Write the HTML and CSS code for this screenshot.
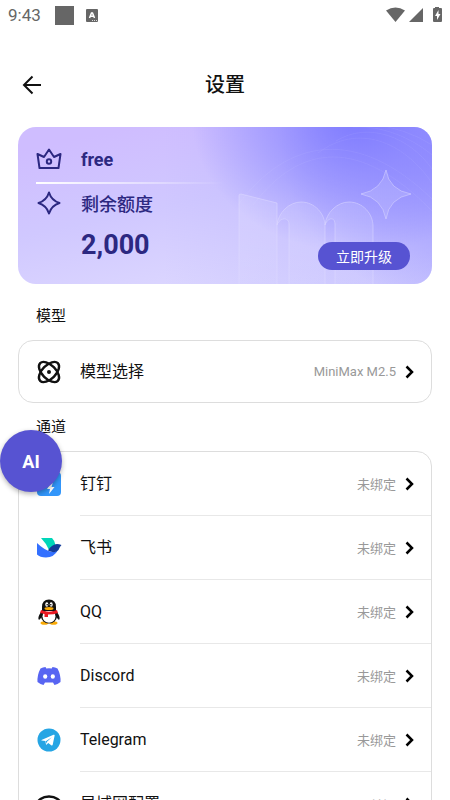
FILE: index.html
```
<!DOCTYPE html>
<html lang="zh-CN">
<head>
    <meta charset="UTF-8">
    <meta name="viewport" content="width=device-width, initial-scale=1.0">
    <title>设置</title>
    <link rel="stylesheet" href="styles.css">
</head>
<body>
    <div class="app">
        <div class="status-bar">
            <span class="time">9:43</span>
            <svg class="status-square" viewBox="0 0 19 19"><rect width="19" height="19" fill="#666"/></svg>
            <svg class="status-input" viewBox="0 0 12 13">
                <rect width="12" height="13" rx="1" fill="#666"/>
                <path d="M3.5 9 5.5 4h1l2 5M4.3 7.3h3.4" fill="none" stroke="#fff" stroke-width="1.5"/>
                <path d="M6 11.5h5" stroke="#ddd" stroke-dasharray="1 1"/>
            </svg>
            <svg class="status-icons" viewBox="0 0 56 18" fill="#666">
                <path d="M0 4.5Q9.5-1.5 19 4.5L9.500 16z"/>
                <path d="M23 16 37 2v14z"/>
                <path d="M49 1h4v1h2q1 0 1 1v12q0 1-1 1h-7q-1 0-1-1V3q0-1 1-1h1z"/>
                <path d="m52.500 4-3.500 6h2v4l3.500-6h-2z" fill="#fff"/>
            </svg>
        </div>

        <header class="header">
            <button class="back" aria-label="返回">
                <svg viewBox="0 0 20 20" fill="none" stroke="#111" stroke-width="2"><path d="M19 10H2M10.500 1.500 2 10l8.500 8.500"/></svg>
            </button>
            <h1>设置</h1>
        </header>

        <main class="content">
            <section class="plan">
                <svg class="plan-art" viewBox="0 0 414 157" preserveAspectRatio="xMaxYMid slice" fill="none">
                    <defs>
                        <linearGradient id="letter" x1="0" y1="66" x2="0" y2="157" gradientUnits="userSpaceOnUse">
                            <stop offset="0" stop-color="#fff" stop-opacity=".14"/>
                            <stop offset="1" stop-color="#fff" stop-opacity=".03"/>
                        </linearGradient>
                    </defs>
                    <g stroke="#fff" stroke-opacity=".06">
                        <path d="M220 78C270 10 340 0 414 72M235 78C282 16 342 10 414 84M300 26C340-4 385 14 414 56M318 14C350-6 392 10 414 42M335 0C370-2 400 16 414 28M350-4Q390 2 414 18"/>
                    </g>
                    <g fill="url(#letter)" stroke="#e0dcff" stroke-opacity=".5">
                        <path d="M221 158V68q0-1 2-1l36 9v82z"/>
                        <path d="M259 98c1-12 12-23 24-23 14 0 24 12 24 24v59h-36v-61c0-7-9-7-12 1z"/>
                        <path d="M307 98c1-12 12-23 24-23 14 0 24 12 24 24v59h-38v-61c0-7-7-7-10 1z"/>
                        <path d="M368 43q3 20 25 24-22 4-25 25-4-21-25-25 21-4 25-24z"/>
                    </g>
                </svg>
                <div class="plan-row plan-name">
                    <svg class="plan-icon" viewBox="0 0 26 26" fill="none" stroke="#2c2881" stroke-width="2" stroke-linejoin="round">
                        <path d="M1.500 8 8 11l5-7.500L18 11l6.500-3-2 14h-19z"/>
                        <circle cx="13" cy="15.500" r="2.200"/>
                    </svg>
                    <strong>free</strong>
                </div>
                <div class="plan-line"></div>
                <div class="plan-row plan-quota">
                    <svg class="plan-icon" viewBox="0 0 26 26" fill="none" stroke="#2c2881" stroke-width="2" stroke-linejoin="round">
                        <path d="M13 2.500Q15.500 10.500 23.500 13 15.500 15.500 13 23.500 10.500 15.500 2.500 13 10.500 10.500 13 2.500z"/>
                    </svg>
                    <span>剩余额度</span>
                </div>
                <div class="plan-bottom">
                    <strong class="amount">2,000</strong>
                    <button class="upgrade">立即升级</button>
                </div>
            </section>

            <h2>模型</h2>
            <div class="list">
                <button class="item">
                    <svg class="icon" viewBox="0 0 26 26" fill="none" stroke="#111" stroke-width="2.400">
                        <ellipse cx="13" cy="13" rx="12.500" ry="6.800" transform="rotate(45 13 13)"/>
                        <ellipse cx="13" cy="13" rx="12.500" ry="6.800" transform="rotate(-45 13 13)"/>
                        <circle cx="13" cy="13" r="2" fill="#111" stroke="none"/>
                    </svg>
                    <span class="row"><span class="name">模型选择</span><span class="value">MiniMax M2.5</span><svg class="arrow" viewBox="0 0 10 14"><path d="m1.500 1.500 5.500 5.500-5.500 5.500"/></svg></span>
                </button>
            </div>

            <h2>通道</h2>
            <div class="list">
                <button class="item">
                    <svg class="icon" viewBox="0 0 26 26">
                        <rect x="1" y="1" width="24" height="24" rx="4" fill="#3296fa"/>
                        <path d="m15.500 11-4.500 7h3l-1 5 5.500-7h-3l1.500-5z" fill="#fff"/>
                    </svg>
                    <span class="row"><span class="name">钉钉</span><span class="value">未绑定</span><svg class="arrow" viewBox="0 0 10 14"><path d="m1.500 1.500 5.500 5.500-5.500 5.500"/></svg></span>
                </button>
                <button class="item">
                    <svg class="icon" viewBox="0 0 26 26">
                        <path d="M5 3h11q3 3 3.500 7L13 15Q10 8 5 3z" fill="#00d6b9"/>
                        <path d="M1 8q7 7 15 9 4 0 6-2-4 7.500-12 7.500-6 0-9-3z" fill="#3370ff"/>
                        <path d="M12 15.500q4-6.500 9-6.500 2 0 4.500 1-2 2-3 5-3 4-10.500.5z" fill="#133c9a"/>
                    </svg>
                    <span class="row"><span class="name">飞书</span><span class="value">未绑定</span><svg class="arrow" viewBox="0 0 10 14"><path d="m1.500 1.500 5.500 5.500-5.500 5.500"/></svg></span>
                </button>
                <button class="item">
                    <svg class="icon" viewBox="0 0 26 26">
                        <path d="M5 13q-4 6-2 8l3-3h14l3 3q2-2-2-8z" fill="#111"/>
                        <ellipse cx="8.500" cy="24" rx="4" ry="1.800" fill="#faab07"/>
                        <ellipse cx="17.500" cy="24" rx="4" ry="1.800" fill="#faab07"/>
                        <ellipse cx="13" cy="17" rx="8" ry="7.500" fill="#111"/>
                        <ellipse cx="13" cy="17.500" rx="6.500" ry="6.200" fill="#fff"/>
                        <path d="M6 12V8q0-7.500 7-7.500T20 8v4z" fill="#111"/>
                        <ellipse cx="10.800" cy="5.500" rx="1.500" ry="2.200" fill="#fff"/>
                        <ellipse cx="15.200" cy="5.500" rx="1.500" ry="2.200" fill="#fff"/>
                        <circle cx="11.200" cy="5.800" r=".8"/><circle cx="14.800" cy="5.800" r=".8"/>
                        <ellipse cx="13" cy="9.500" rx="4.500" ry="1.500" fill="#faab07"/>
                        <path d="M5 11q8 3.500 16 0l1 3q-4 1.500-10 1.500V18H8.500v-3L4 14z" fill="#eb1923"/>
                    </svg>
                    <span class="row"><span class="name">QQ</span><span class="value">未绑定</span><svg class="arrow" viewBox="0 0 10 14"><path d="m1.500 1.500 5.500 5.500-5.500 5.500"/></svg></span>
                </button>
                <button class="item">
                    <svg class="icon" viewBox="0 0 26 26">
                        <path d="M9.500 4Q7 4 4.500 5.500 1 12 1.500 19q3 2.500 6 3l1.500-2.500h8l1.500 2.500q3-.5 6-3Q25 12 21.500 5.500 19 4 16.500 4l-.8 1.500q-2.700-.4-5.400 0z" fill="#5865f2"/>
                        <ellipse cx="9.200" cy="13.500" rx="2.100" ry="2.300" fill="#fff"/>
                        <ellipse cx="16.800" cy="13.500" rx="2.100" ry="2.300" fill="#fff"/>
                    </svg>
                    <span class="row"><span class="name">Discord</span><span class="value">未绑定</span><svg class="arrow" viewBox="0 0 10 14"><path d="m1.500 1.500 5.500 5.500-5.500 5.500"/></svg></span>
                </button>
                <button class="item">
                    <svg class="icon" viewBox="0 0 26 26">
                        <circle cx="13" cy="13" r="11.500" fill="#26a5e4"/>
                        <path d="m5.500 13 12-5.200q1.400-.5 1.100 1l-1.900 9q-.3 1.300-1.500.5l-3-2.200-1.500 1.500q-.7.500-.8-.5l-.5-3-3.700-.6q-.7-.2-.2-.5z" fill="#fff"/>
                        <path d="m9.800 14.200 6-4-4.800 4.600-.5 2z" fill="#26a5e4"/>
                    </svg>
                    <span class="row"><span class="name">Telegram</span><span class="value">未绑定</span><svg class="arrow" viewBox="0 0 10 14"><path d="m1.500 1.500 5.500 5.500-5.500 5.500"/></svg></span>
                </button>
                <button class="item">
                    <svg class="icon" viewBox="0 0 26 26" fill="none" stroke="#111" stroke-width="2.400">
                        <ellipse cx="13" cy="14" rx="12" ry="8.500"/>
                        <circle cx="13" cy="14" r="3"/>
                    </svg>
                    <span class="row"><span class="name">局域网配置</span><span class="value">已关闭</span><svg class="arrow" viewBox="0 0 10 14"><path d="m1.500 1.500 5.500 5.500-5.500 5.500"/></svg></span>
                </button>
            </div>
        </main>

        <button class="ai">AI</button>
    </div>
</body>
</html>
```

FILE: styles.css
```
* {
    margin: 0;
    padding: 0;
    box-sizing: border-box;
    font-family: Roboto, "Noto Sans CJK SC", sans-serif;
}

body {
    background: #fff;
    color: #111;
}

button {
    border: none;
    background: none;
    color: inherit;
    cursor: pointer;
}

svg {
    display: block;
    flex-shrink: 0;
}

.app {
    position: relative;
    display: flex;
    flex-direction: column;
    height: 100vh;
    overflow: hidden;
}

.status-bar {
    display: flex;
    align-items: center;
    height: 30px;
    padding: 0 8px;
    flex-shrink: 0;
}

.time {
    font-size: 17px;
    color: #666;
}

.status-square {
    width: 19px;
    height: 19px;
    margin-left: 14px;
}

.status-input {
    width: 12px;
    height: 13px;
    margin-left: 12px;
}

.status-icons {
    width: 56px;
    height: 18px;
    margin-left: auto;
}

.header {
    display: grid;
    grid-template-columns: 28px 1fr 28px;
    align-items: center;
    height: 110px;
    padding: 0 18px;
    flex-shrink: 0;
}

.header h1 {
    font-size: 20px;
    font-weight: 500;
    line-height: 28px;
    text-align: center;
}

.back svg {
    width: 20px;
    height: 20px;
    margin: auto;
}

.content {
    flex: 1;
    min-height: 0;
    padding: 0 18px;
    margin-top: -13px;
    overflow: hidden;
}

.plan {
    position: relative;
    height: 157px;
    margin-bottom: 20px;
    padding: 18px;
    border-radius: 18px;
    overflow: hidden;
    color: #2c2881;
    background:
        radial-gradient(ellipse 40% 85% at 82% -5%, rgba(112, 110, 255, 0.9) 0%, rgba(125, 122, 255, 0.6) 40%, rgba(160, 155, 255, 0) 100%),
        radial-gradient(ellipse 45% 110% at 108% 5%, rgba(120, 117, 255, 0.75), rgba(150, 145, 255, 0) 100%),
        linear-gradient(168deg, #cfbdff 10%, #d0c8ff 45%, #e2deff 100%);
}

/* soft tint towards the right side */
.plan::before {
    content: "";
    position: absolute;
    inset: 0;
    background: linear-gradient(90deg, rgba(150, 145, 255, 0) 35%, rgba(150, 145, 255, 0.35));
}

.plan-art {
    position: absolute;
    inset: 0;
    width: 100%;
    height: 100%;
}

.plan-row {
    display: flex;
    align-items: center;
    gap: 19px;
    height: 28px;
    font-size: 18px;
}

.plan-icon {
    width: 26px;
    height: 26px;
}

.plan-quota {
    margin-top: 5px;
    font-weight: 500;
}

.plan-line {
    height: 2px;
    margin-top: 9px;
    width: 50%;
    background: linear-gradient(90deg, #fff, rgba(255, 255, 255, 0));
}

.plan-bottom {
    position: relative;
    display: flex;
    justify-content: space-between;
    padding: 12px 4px 0 45px;
}

.amount {
    font-size: 27px;
    line-height: 32px;
}

.upgrade {
    height: 28px;
    margin-top: 13px;
    padding: 0 18px;
    border-radius: 14px;
    background: #5753d2;
    color: #fff;
    font-size: 14px;
}

h2 {
    margin: 12px 18px;
    font-size: 15px;
    font-weight: 400;
    line-height: 24px;
}

.list {
    border: 1px solid #ddd;
    border-radius: 15px;
    overflow: hidden;
}

.item {
    display: flex;
    align-items: center;
    gap: 18px;
    width: 100%;
    padding-left: 17px;
    text-align: left;
}

.icon {
    width: 26px;
    height: 26px;
}

.row {
    display: flex;
    flex: 1;
    align-items: center;
    height: 64px;
    padding-right: 16px;
    border-bottom: 1px solid #e8e8e8;
}

.item:last-child .row {
    border-bottom: none;
}

.item:only-child .row {
    height: 61px;
}

.name {
    flex: 1;
    font-size: 16px;
    line-height: 22px;
}

.value {
    margin-right: 9px;
    font-size: 13px;
    color: #999;
}

.arrow {
    width: 10px;
    height: 14px;
    fill: none;
    stroke: #000;
    stroke-width: 2.5;
}

/* floating assistant button */
.ai {
    position: absolute;
    left: 0;
    top: 430px;
    width: 62px;
    height: 62px;
    border-radius: 50%;
    background: #5753d2;
    color: #fff;
    font-size: 18px;
    font-weight: 700;
    box-shadow: 0 2px 5px rgba(0, 0, 0, 0.3);
}
```
